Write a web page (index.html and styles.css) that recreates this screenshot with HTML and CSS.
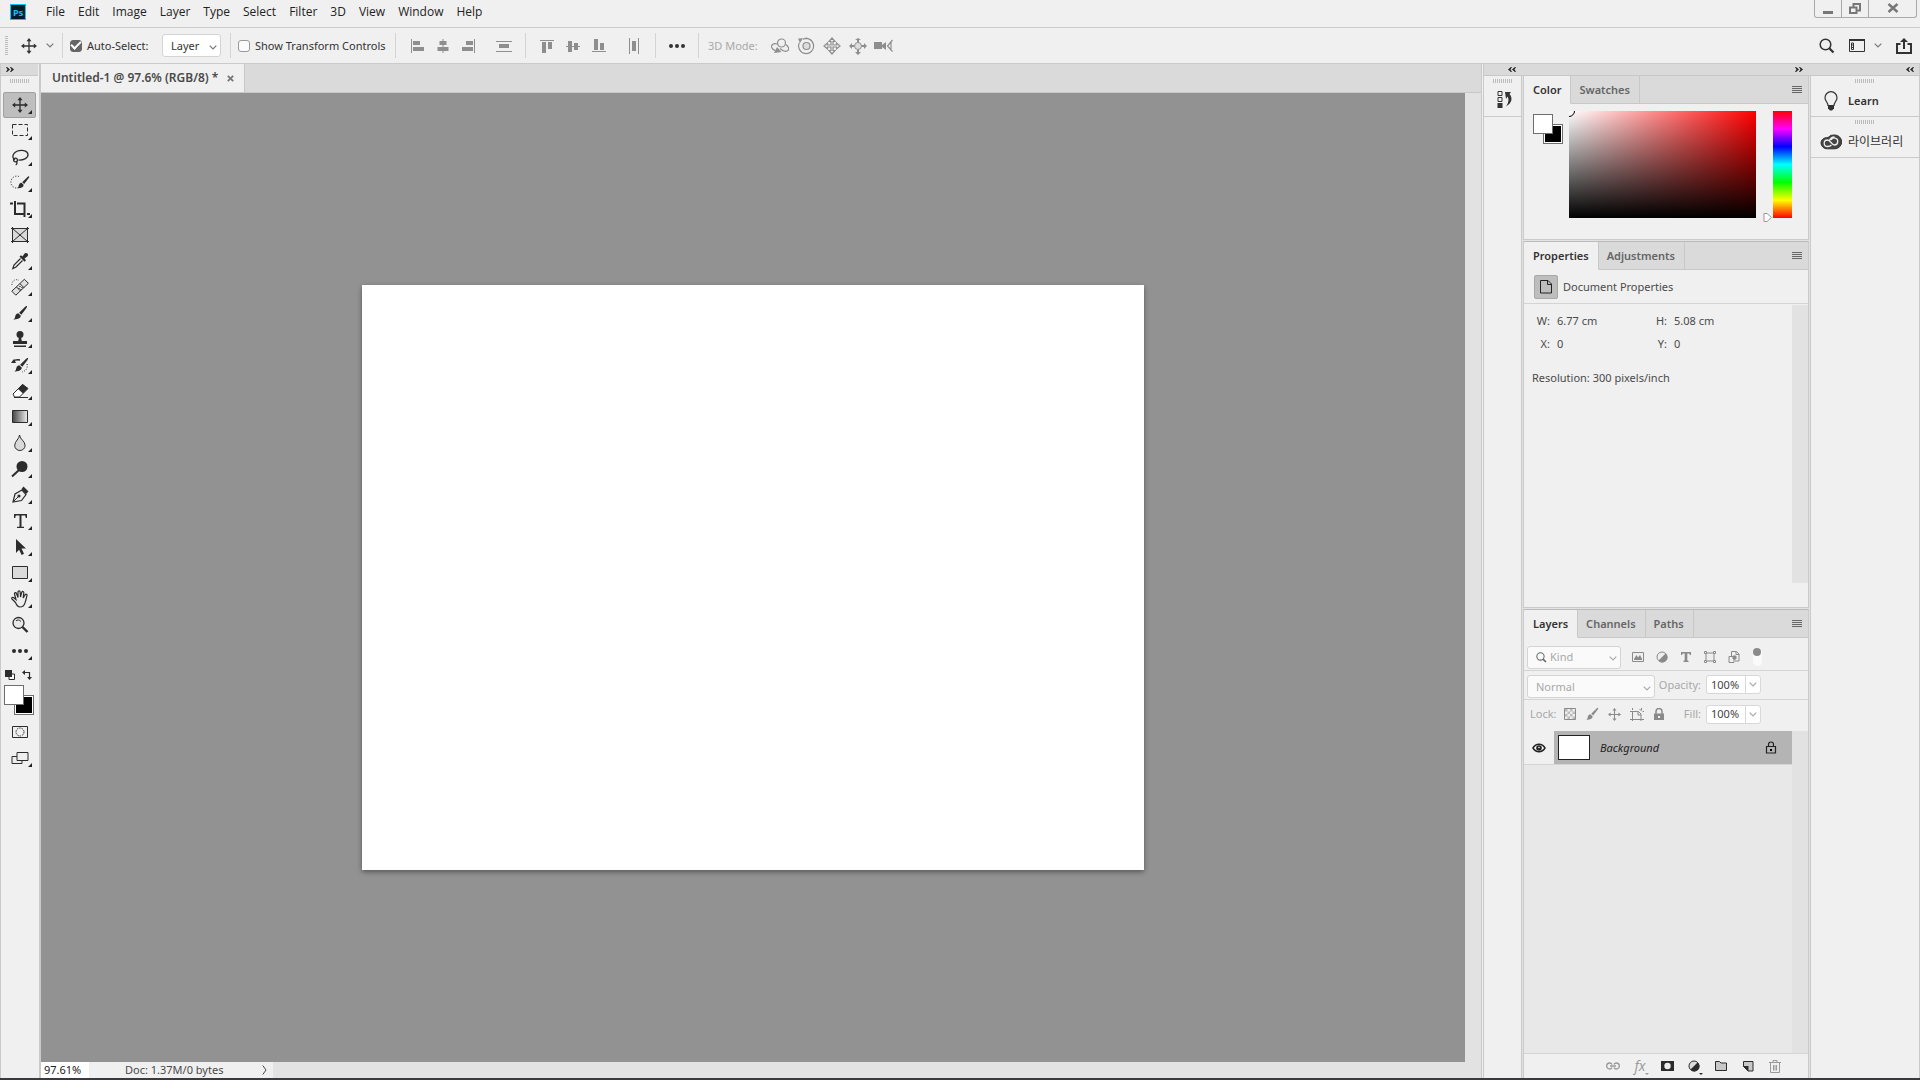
FILE: index.html
```
<!DOCTYPE html>
<html lang="en">
<head>
    <meta charset="UTF-8">
    <meta name="viewport" content="width=device-width, initial-scale=1.0">
    <title>Untitled-1 @ 97.6% (RGB/8) *</title>
    <link rel="stylesheet" href="styles.css">
</head>
<body>
    <!-- shared icons -->
    <svg class="sprite">
        <symbol id="chevron" viewBox="0 0 8 5"><path d="M.7.7 4 4 7.3.7" fill="none" stroke="currentColor" stroke-width="1.2"/></symbol>
        <symbol id="burger" viewBox="0 0 10 8"><path d="M0 .5h10M0 2.5h10M0 4.5h10M0 6.5h10" stroke="currentColor"/></symbol>
        <symbol id="expand" viewBox="0 0 8 5"><path d="M0 0h1l3 2.5L1 5H0l1.5-2.5zM4 0h1l3 2.5L5 5H4l1.500-2.500z" fill="currentColor"/></symbol>
        <symbol id="collapse" viewBox="0 0 8 5"><path d="M4 0H3L0 2.500 3 5h1L2.500 2.500zM8 0H7L4 2.500 7 5h1L6.500 2.500z" fill="currentColor"/></symbol>
        <symbol id="move" viewBox="0 0 16 16"><path d="M8 2v12M2 8h12" stroke="currentColor" stroke-width="1.300"/><path d="M8 0l2.500 3.200h-5zM8 16l2.500-3.200h-5zM0 8l3.200-2.500v5zM16 8l-3.200-2.500v5z" fill="currentColor"/></symbol>
        <symbol id="brush" viewBox="0 0 18 18"><path d="M16.800 1.200c.6.5-.2 1.800-.9 2.800L10.500 11 8 8.600 14.500 2.300c.9-.8 1.800-1.500 2.300-1.100zM7 9.300l2.800 2.600c.2 3-3 4.600-8.300 4.300 2-.9 1.700-2.200 2.300-4.200.5-1.700 1.800-2.600 3.200-2.700z" fill="currentColor"/></symbol>
        <symbol id="search" viewBox="0 0 16 16"><circle cx="6.500" cy="6.500" r="5.300" fill="none" stroke="currentColor" stroke-width="1.500"/><path d="M10.300 10.300l4.200 4.200" stroke="currentColor" stroke-width="2.300"/></symbol>
    </svg>

    <header class="menubar">
        <svg class="logo" width="16" height="16"><rect x=".5" y=".5" width="15" height="15" fill="#001d26" stroke="#00c8ff"/><text x="3" y="11.500">Ps</text></svg>
        <nav class="menus">
            <button>File</button>
            <button>Edit</button>
            <button>Image</button>
            <button>Layer</button>
            <button>Type</button>
            <button>Select</button>
            <button>Filter</button>
            <button>3D</button>
            <button>View</button>
            <button>Window</button>
            <button>Help</button>
        </nav>
        <div class="window-buttons">
            <button aria-label="Minimize"><svg width="12" height="12"><path d="M1 9.500h10" stroke="currentColor" stroke-width="3"/></svg></button>
            <button aria-label="Restore"><svg width="12" height="12" fill="none" stroke="currentColor" stroke-width="2"><path d="M4.500 3.500V1H11v6.500H8.500M1 4.500h6.500V10H1z"/></svg></button>
            <button class="close" aria-label="Close"><svg width="12" height="12"><path d="M1.500 1l9 8M10.500 1l-9 8" stroke="currentColor" stroke-width="2.400"/></svg></button>
        </div>
    </header>

    <div class="optionsbar">
        <span class="grip grip-vertical"></span>
        <button class="current-tool" aria-label="Move tool"><svg width="16" height="16"><use href="#move"/></svg><svg class="chevron" width="8" height="5"><use href="#chevron"/></svg></button>
        <span class="divider"></span>
        <label class="check auto-select"><input type="checkbox" checked>Auto-Select:</label>
        <span class="dropdown option-target">
            <select aria-label="Auto-select target"><option>Layer</option><option>Group</option></select>
            <svg class="chevron" width="8" height="5"><use href="#chevron"/></svg>
        </span>
        <span class="divider"></span>
        <label class="check transform"><input type="checkbox">Show Transform Controls</label>
        <span class="divider"></span>
        <div class="option-group align">
            <button aria-label="Align left edges"><svg width="16" height="16"><path d="M2 1h1v14H2zM4 3h7v4H4zM4 9h11v4H4z"/></svg></button>
            <button aria-label="Align horizontal centers"><svg width="16" height="16"><path d="M7.500 1h1v14h-1zM4.500 3h7v4h-7zM2.500 9h11v4h-11z"/></svg></button>
            <button aria-label="Align right edges"><svg width="16" height="16"><path d="M13 1h1v14h-1zM5 3h7v4H5zM1 9h11v4H1z"/></svg></button>
            <button class="spaced" aria-label="Distribute vertically"><svg width="16" height="16"><path d="M0 3h16v1H0zM0 13h16v1H0zM3 6h10v4H3z"/></svg></button>
        </div>
        <span class="divider"></span>
        <div class="option-group align">
            <button aria-label="Align top edges"><svg width="16" height="16"><path d="M1 2h14v1H1zM3 4h4v11H3zM9 4h4v7H9z"/></svg></button>
            <button aria-label="Align vertical centers"><svg width="16" height="16"><path d="M1 8h14v1H1zM3 3h4v11H3zM9 5h4v7H9z"/></svg></button>
            <button aria-label="Align bottom edges"><svg width="16" height="16"><path d="M1 13h14v1H1zM3 1h4v11H3zM9 5h4v7H9z"/></svg></button>
            <button class="spaced" aria-label="Distribute horizontally"><svg width="16" height="16"><path d="M3 0h1v16H3zM12 0h1v16h-1zM6 3h4v10H6z"/></svg></button>
        </div>
        <span class="divider"></span>
        <div class="option-group">
            <button aria-label="More options"><svg width="16" height="16"><circle cx="2" cy="8" r="2"/><circle cx="8" cy="8" r="2"/><circle cx="14" cy="8" r="2"/></svg></button>
        </div>
        <span class="divider"></span>
        <span class="mode-label">3D Mode:</span>
        <div class="option-group align">
            <button aria-label="Orbit the 3D camera"><svg width="18" height="16" fill="none" stroke="currentColor" stroke-width="1.200"><circle cx="10.500" cy="5" r="4"/><path d="M6 6C2 5 0 7 .7 9.500c.6 1.500 2 2.500 3.800 3.200M15 6.500c3 2.500 3.500 5 1.500 6.300-2 1-5 0-7.500-2.300"/><path d="M6 9l4.500 5-7.500 1z" fill="currentColor" stroke="none"/></svg></button>
            <button aria-label="Roll the 3D camera"><svg width="18" height="18" fill="none" stroke="currentColor" stroke-width="1.200"><circle cx="9.500" cy="9" r="3.500" fill="#ddd"/><path d="M2.500 5.500A7.500 7.500 0 1 0 6 2.200c3-1.500 7-1 9 2"/><path d="M1 1.500l5-.3-3 4.800z" fill="currentColor" stroke="none"/></svg></button>
            <button aria-label="Pan the 3D camera"><svg width="18" height="18" fill="#eee" stroke="currentColor" stroke-width="1.200"><path d="M9 1l3 3.500h-2V8h3.500V6L17 9l-3.500 3v-2H10v3.500h2L9 17l-3-3.500h2V10H4.500v2L1 9l3.500-3v2H8V4.500H6z"/></svg></button>
            <button aria-label="Slide the 3D camera"><svg width="18" height="18"><circle cx="9" cy="9" r="3.500" fill="#ddd" stroke="currentColor"/><path d="M8 5h2V3h2L9 1 6 3h2zM8 13h2v2h2l-3 3-3-3h2zM5 8v2H3v2L0 9l3-3v2zM13 8v2h2v2l3-3-3-3v2z"/></svg></button>
            <button aria-label="Zoom the 3D camera"><svg width="20" height="14"><path d="M0 3h8v7H0zM8 6l4-3v8L8 8z"/><path d="M18.500 1l-5 6 5 5.500M17 3v7" fill="none" stroke="currentColor" stroke-width="1.200"/></svg></button>
        </div>
        <div class="workspace-tools">
            <button aria-label="Search"><svg width="16" height="16"><use href="#search"/></svg></button>
            <button class="workspace" aria-label="Workspace"><svg width="16" height="13" fill="none" stroke="currentColor"><path d="M.5 1h15v11.500H.5z"/><path d="M0 1h16" stroke-width="2"/><path d="M2.500 4h2v6.500h-2zM2.500 6h2M2.500 8.500h2"/></svg><svg class="chevron" width="8" height="5"><use href="#chevron"/></svg></button>
            <button aria-label="Share"><svg width="16" height="16" fill="none" stroke="currentColor" stroke-width="2"><path d="M4.500 6H1v9h14V6h-3.500M8 11V3"/><path d="M8 0l4 4H4z" fill="currentColor" stroke="none"/></svg></button>
        </div>
    </div>

    <main class="workspace-area">
        <aside class="toolbox">
            <button class="strip strip-left" aria-label="Expand tools"><svg width="8" height="5"><use href="#expand"/></svg></button>
            <span class="grip"></span>
            <div class="tools">
                <button class="tool more active" aria-label="Move"><svg width="18" height="18"><use href="#move" x="1" y="1" width="16" height="16"/></svg></button>
                <button class="tool more" aria-label="Rectangular marquee"><svg width="18" height="18"><path d="M1.500 2.500h15v11h-15z" fill="none" stroke="currentColor" stroke-dasharray="4 2"/></svg></button>
                <button class="tool more" aria-label="Lasso"><svg width="18" height="18" fill="none" stroke="currentColor" stroke-width="1.300"><path d="M4 12C0 9 2 4 8 2.600c5-1 9 .9 9 4.200 0 3.500-5 5.600-9.500 5.200"/><circle cx="4.500" cy="12" r="1.900"/><path d="M5.500 13.500c1 1.500.4 3-.8 3.500"/></svg></button>
                <button class="tool more" aria-label="Quick selection"><svg width="20" height="18"><path d="M9 2.500a6 6 0 1 0-1 11.500" fill="none" stroke="currentColor" stroke-dasharray="1.200 1.500"/><use href="#brush" x="6" y="1" width="14" height="15"/></svg></button>
                <button class="tool more" aria-label="Crop"><svg width="20" height="18"><path d="M0 3.500h3M5 1v13h10M7 3.500h7.500V17M17 14h3" fill="none" stroke="currentColor" stroke-width="2"/></svg></button>
                <button class="tool" aria-label="Frame"><svg width="18" height="18" fill="#dadada" stroke="currentColor"><path d="M1.500 2.500h15v13h-15z"/><path d="M1.500 2.500l15 13M16.500 2.500l-15 13"/><path d="M0 2.500h2M16 2.500h2M0 15.500h2M16 15.500h2M1.500 1v2M16.500 1v2M1.500 15v2M16.500 15v2"/></svg></button>
                <button class="tool more" aria-label="Eyedropper"><svg width="18" height="18"><path d="M9.500 6.500L3 13l-1.200 3.500L5 15l6.500-6.500" fill="#eee" stroke="currentColor" stroke-width="1.200"/><path d="M8.500 4.500L10 3.200l1.500 1.200 2-2.800c1-1 2.300-.7 3 0 .7.900.8 2-.2 3l-2.800 2L15 8.300 13.500 9.800z" fill="currentColor"/></svg></button>
                <button class="tool more" aria-label="Spot healing brush"><svg width="18" height="18" fill="none" stroke="currentColor"><path d="M1 7a4.500 4.500 0 0 1 7-4.500" stroke-dasharray="1 1.500"/><path d="M.8 13.200L13.400 1.300l4 4L4.800 17.200z" fill="#e0e0e0"/><path d="M5.500 9l4 4M9 5.700l4 4"/><path d="M9 8v1M11 9v1M8 10v1M10 11v1" stroke-width="1.200"/></svg></button>
                <button class="tool more" aria-label="Brush"><svg width="16" height="18"><use href="#brush"/></svg></button>
                <button class="tool more" aria-label="Clone stamp"><svg width="18" height="18" fill="currentColor"><circle cx="9" cy="4.500" r="3.500"/><path d="M8 7h2l.8 4H16v3H2v-3h5.200zM3 15.500h12V17H3z"/></svg></button>
                <button class="tool more" aria-label="History brush"><svg width="18" height="18"><use href="#brush" x="2" width="16" height="18"/><path d="M2 5.500c2-2 4-2 7-1.500" fill="none" stroke="currentColor" stroke-width="1.500"/><path d="M0 7l3-4 2 4z"/><path d="M16 8c1 4-1 7-5 8" fill="none" stroke="currentColor" stroke-dasharray="1 1.500"/></svg></button>
                <button class="tool more" aria-label="Eraser"><svg width="18" height="18"><path d="M2 12l9.500-9.500 5.500 4-8.500 8.500H3.500z" fill="#fff" stroke="currentColor"/><path d="M7 7l4.500-5 5.500 4.500-5 5z"/><path d="M3 15.500h14" stroke="currentColor"/></svg></button>
                <button class="tool more" aria-label="Gradient"><svg width="18" height="18"><defs><linearGradient id="fade"><stop stop-color="#444"/><stop offset="1" stop-color="#eee"/></linearGradient></defs><path d="M1.500 2.500h15v12h-15z" fill="url(#fade)" stroke="currentColor"/></svg></button>
                <button class="tool more" aria-label="Blur"><svg width="18" height="18"><path d="M8.500 1c0 4-4.800 6-4.800 10.500a5.200 5 0 0 0 10.400 0C14.100 7 9 5.500 8.500 1z" fill="#dadada" stroke="currentColor"/></svg></button>
                <button class="tool more" aria-label="Dodge"><svg width="18" height="18"><circle cx="11" cy="6.500" r="5.500"/><path d="M8 10l-7 6.500" stroke="currentColor" stroke-width="2"/></svg></button>
                <button class="tool more" aria-label="Pen"><svg width="18" height="18"><path d="M2 16l2-8 7-4 4 4.500-4.500 6z" fill="#eee" stroke="currentColor" stroke-width="1.200"/><path d="M10.500 3l2-2.500 5 5-2.500 2.500z"/><path d="M2 16l6-6" stroke="currentColor"/><circle cx="8" cy="10" r="1.600"/></svg></button>
                <button class="tool more" aria-label="Type"><svg width="18" height="18"><path d="M3 2h13v4h-1.200l-.6-2.400h-3.700v11.200H13V16H6v-1.200h2.500V3.600H4.800L4.200 6H3z"/></svg></button>
                <button class="tool more" aria-label="Path selection"><svg width="18" height="18"><path d="M5 1l10 9.500h-4.500l2.500 5.300-2.400 1.200-2.500-5.200L5 15z"/></svg></button>
                <button class="tool more" aria-label="Rectangle"><svg width="18" height="18"><path d="M1.500 2.500h15v12h-15z" fill="#dadada" stroke="currentColor"/></svg></button>
                <button class="tool more" aria-label="Hand"><svg width="18" height="18" fill="#eee" stroke="currentColor" stroke-width="1.200"><path d="M4.500 12.500L1 9c-1-1.200.7-2.200 1.800-1.300L5 9.500 3.500 4C3.200 2.500 5 2 5.500 3.500L7 7.500V2C7 .6 9 .6 9.200 2l.3 5L10.800 2.200c.5-1.300 2.200-.8 2 .5L12.200 8l1.900-3.200c.8-1.200 2.300-.4 1.900.8-.9 3.200-1.200 5-1.900 7-1 3.500-3 4.400-5.100 4.400-2.500 0-3.500-2-4.500-4.500z"/></svg></button>
                <button class="tool" aria-label="Zoom"><svg width="18" height="18"><circle cx="7.500" cy="7" r="5.500" fill="#e8e8e8" stroke="currentColor" stroke-width="1.300"/><path d="M5 5c1-1.500 3.500-1.500 5 .5" fill="none" stroke="currentColor"/><path d="M11.500 11l5 5" stroke="currentColor" stroke-width="2.400"/></svg></button>
                <button class="tool more" aria-label="Edit toolbar"><svg width="18" height="18"><circle cx="3" cy="9" r="2"/><circle cx="9" cy="9" r="2"/><circle cx="15" cy="9" r="2"/></svg></button>
            </div>
            <div class="color-shortcuts">
                <button aria-label="Default colors"><svg width="10" height="10"><path d="M4 4h5.500v5.500H4z" fill="#fff" stroke="currentColor"/><path d="M0 0h7v7H0z"/></svg></button>
                <button aria-label="Swap colors"><svg width="10" height="10"><path d="M2 2.500h5.500V8" fill="none" stroke="currentColor" stroke-width="1.200"/><path d="M0 2.500L3 0v5zM5 7h5l-2.500 3z"/></svg></button>
            </div>
            <div class="swatches">
                <button class="swatch swatch-back" aria-label="Background color"></button>
                <button class="swatch swatch-front" aria-label="Foreground color"></button>
            </div>
            <div class="modes">
                <button class="tool" aria-label="Quick mask"><svg width="18" height="18" fill="none" stroke="currentColor"><path d="M1.500 3.500h15v11h-15z"/><circle cx="9" cy="9" r="4" stroke-dasharray="1.500 1"/></svg></button>
                <button class="tool more" aria-label="Screen mode"><svg width="18" height="18" fill="#eee" stroke="currentColor"><path d="M1 7.500h10v7H1z"/><path d="M6 3.500h11v8H6z"/></svg></button>
            </div>
        </aside>

        <section class="document">
            <div class="document-tabs">
                <div class="document-tab">
                    <span>Untitled-1 @ 97.6% (RGB/8) *</span>
                    <button aria-label="Close document"><svg width="7" height="7"><path d="M.8.8l5.400 5.400M6.200.8L.8 6.200" stroke="currentColor" stroke-width="1.800"/></svg></button>
                </div>
            </div>
            <div class="viewport">
                <div class="canvas-area"><div class="canvas"></div></div>
                <div class="scroll-track"></div>
            </div>
            <footer class="statusbar">
                <input class="zoom" aria-label="Zoom" value="97.61%">
                <div class="doc-info">
                    <span>Doc: 1.37M/0 bytes</span>
                    <button aria-label="Status options"><svg width="5" height="10"><path d="M.8.5L4 5 .8 9.500" fill="none" stroke="currentColor"/></svg></button>
                </div>
            </footer>
        </section>

        <aside class="docks">
            <div class="strip dock-strip">
                <button class="collapse-icons" aria-label="Expand icon dock"><svg width="8" height="5"><use href="#collapse"/></svg></button>
                <button class="collapse-panels" aria-label="Collapse panels"><svg width="8" height="5"><use href="#expand"/></svg></button>
                <button class="collapse-right" aria-label="Expand right dock"><svg width="8" height="5"><use href="#collapse"/></svg></button>
            </div>
            <div class="dock-columns">
                <div class="icon-dock">
                    <div class="dock-group">
                        <span class="grip"></span>
                        <button aria-label="History"><svg width="16" height="18"><path d="M1 .5h4v4H1zM1 6.500h4v4H1z" fill="none" stroke="currentColor"/><path d="M.5 12h5v5h-5zM8 1h6l-1.500 2c3.500 4 2.500 9-3.500 12.500C12 11 12 8 10.500 5.500L9 8z"/></svg></button>
                    </div>
                </div>

                <div class="panels">
                    <section class="panel color-panel">
                        <div class="tabs">
                            <button class="tab active">Color</button>
                            <button class="tab">Swatches</button>
                            <button class="panel-menu" aria-label="Panel menu"><svg width="10" height="8"><use href="#burger"/></svg></button>
                        </div>
                        <div class="picker">
                            <div class="swatches">
                                <button class="swatch swatch-back" aria-label="Background color"></button>
                                <button class="swatch swatch-front" aria-label="Foreground color"></button>
                            </div>
                            <div class="color-field"><span class="field-cursor"></span></div>
                            <svg class="hue-pointer" width="9" height="9"><path d="M1 .5h3L8.500 4.500 4 8.500H1z" fill="#fff" stroke="#999"/></svg>
                            <div class="hue"></div>
                        </div>
                    </section>

                    <section class="panel properties-panel">
                        <div class="tabs">
                            <button class="tab active">Properties</button>
                            <button class="tab">Adjustments</button>
                            <button class="panel-menu" aria-label="Panel menu"><svg width="10" height="8"><use href="#burger"/></svg></button>
                        </div>
                        <div class="properties-title">
                            <button aria-label="Document"><svg width="12" height="14" fill="none" stroke="#222"><path d="M.5.5H8l3.500 3.500v9H.5z"/><path d="M7.500.5v4h4"/></svg></button>
                            <span>Document Properties</span>
                        </div>
                        <div class="properties-body">
                            <div class="properties-content">
                                <dl class="measures">
                                    <dt>W:</dt><dd>6.77 cm</dd>
                                    <dt>H:</dt><dd>5.08 cm</dd>
                                    <dt>X:</dt><dd>0</dd>
                                    <dt>Y:</dt><dd>0</dd>
                                </dl>
                                <p class="resolution">Resolution: 300 pixels/inch</p>
                            </div>
                            <div class="scroll-track"></div>
                        </div>
                    </section>

                    <section class="panel layers-panel">
                        <div class="tabs">
                            <button class="tab active">Layers</button>
                            <button class="tab">Channels</button>
                            <button class="tab">Paths</button>
                            <button class="panel-menu" aria-label="Panel menu"><svg width="10" height="8"><use href="#burger"/></svg></button>
                        </div>
                        <div class="layer-row filter-row">
                            <span class="dropdown kind">
                                <svg class="kind-icon" width="11" height="11"><use href="#search"/></svg>
                                <select aria-label="Filter type"><option>Kind</option><option>Name</option></select>
                                <svg class="chevron" width="8" height="5"><use href="#chevron"/></svg>
                            </span>
                            <div class="filters">
                                <button aria-label="Pixel layers"><svg width="12" height="12"><path d="M.5 1.500h11v9H.5z" fill="none" stroke="currentColor"/><path d="M2 8l2.500-4L6 6.500 8 4l2 4v1H2z"/></svg></button>
                                <button aria-label="Adjustment layers"><svg width="12" height="12"><circle cx="6" cy="6" r="5" fill="#eee" stroke="currentColor"/><path d="M9.500 2.500A5 5 0 1 1 2.500 9.500z"/></svg></button>
                                <button aria-label="Type layers"><svg width="12" height="12"><path d="M1 1h10v3H9.800c0-1-.5-1.500-1.300-1.500H7.300V9c0 .6.400.8 1.200.8V11h-5V9.800c.8 0 1.200-.2 1.200-.8V2.500H3.500C2.700 2.500 2.200 3 2.200 4H1z"/></svg></button>
                                <button aria-label="Shape layers"><svg width="12" height="12" fill="#eee" stroke="currentColor"><path d="M2 2h8v8H2z"/><path d="M.5.5h2v2h-2zM9.500.5h2v2h-2zM.5 9.500h2v2h-2zM9.500 9.500h2v2h-2z"/></svg></button>
                                <button aria-label="Smart objects"><svg width="12" height="12" fill="none" stroke="currentColor"><path d="M3.500 5V.5h5l2.500 2.500v7H7M8 .5V3.500h3"/><path d="M1 5.500h5v6H1z"/><path d="M5 5h3v3H5z" fill="currentColor"/></svg></button>
                                <button class="filter-toggle" aria-label="Toggle filtering"><span></span></button>
                            </div>
                        </div>
                        <div class="layer-row blend-row">
                            <span class="dropdown blend">
                                <select aria-label="Blend mode"><option>Normal</option><option>Multiply</option></select>
                                <svg class="chevron" width="8" height="5"><use href="#chevron"/></svg>
                            </span>
                            <label class="amount">Opacity: <span class="stepper"><input value="100%"><button aria-label="Opacity slider"><svg width="8" height="5"><use href="#chevron"/></svg></button></span></label>
                        </div>
                        <div class="layer-row lock-row">
                            <span class="lock-label">Lock:</span>
                            <div class="locks">
                                <button aria-label="Lock transparent pixels"><svg width="12" height="12"><path d="M.5.500h11v11H.5z" fill="#eee" stroke="currentColor"/><path d="M1 1h2.500v2.500H1zM6 1h2.500v2.500H6zM3.500 3.500H6V6H3.500zM8.500 3.500H11V6H8.500zM1 6h2.500v2.500H1zM6 6h2.500v2.500H6zM3.500 8.500H6V11H3.500zM8.500 8.500H11V11H8.500z" opacity=".5"/></svg></button>
                                <button aria-label="Lock image pixels"><svg width="14" height="14"><use href="#brush"/></svg></button>
                                <button aria-label="Lock position"><svg width="13" height="13"><use href="#move"/></svg></button>
                                <button aria-label="Lock artboard nesting"><svg width="14" height="13" fill="none" stroke="currentColor"><path d="M0 3.500h8.500L11 6v7M2.500 0v2M2.500 3v10M0 11.500h14M9.500 1l2 2M12.500 3.500H14M11.500 0v2M8 4v3h3"/></svg></button>
                                <button aria-label="Lock all"><svg width="12" height="13"><path d="M3 6V3.500a3 3 0 0 1 6 0V6" fill="none" stroke="currentColor" stroke-width="1.500"/><path d="M1 5.500h10V12H1z"/><path d="M5 8h2v2H5z" fill="#eee"/></svg></button>
                            </div>
                            <label class="amount">Fill: <span class="stepper"><input value="100%"><button aria-label="Fill slider"><svg width="8" height="5"><use href="#chevron"/></svg></button></span></label>
                        </div>
                        <div class="layer-list">
                            <div class="layer-items">
                                <div class="layer">
                                    <button class="visibility" aria-label="Layer visibility"><svg width="14" height="10"><path d="M1 5c3-5 9-5 12 0-3 5-9 5-12 0z" fill="#fff" stroke="currentColor" stroke-width="1.500"/><circle cx="7" cy="5" r="2.800"/><circle cx="7" cy="4.500" r=".8" fill="#fff"/></svg></button>
                                    <div class="layer-body">
                                        <span class="thumb"></span>
                                        <em>Background</em>
                                        <svg width="12" height="13"><path d="M3.500 5.500V3.500a2.500 2.500 0 0 1 5 0v2M1.500 5.500h9v6.500h-9z" fill="none" stroke="#222" stroke-width="1.200"/><path d="M5 8h2v2H5z"/></svg>
                                    </div>
                                </div>
                            </div>
                            <div class="scroll-track"></div>
                        </div>
                        <div class="layer-actions">
                            <button class="off" aria-label="Link layers"><svg width="14" height="8" fill="none" stroke="currentColor" stroke-width="1.300"><path d="M6 2.500C5.500 1.300 4.800 1 3.700 1a3 3 0 0 0 0 6C4.800 7 5.500 6.700 6 5.500M8 2.500C8.500 1.300 9.200 1 10.300 1a3 3 0 0 1 0 6C9.200 7 8.500 6.700 8 5.500M4 4h6"/></svg></button>
                            <button class="off fx" aria-label="Layer style">fx</button>
                            <button aria-label="Add mask"><svg width="13" height="10"><path d="M0 0h13v10H0z"/><circle cx="6.500" cy="5" r="3.200" fill="#eee"/></svg></button>
                            <button class="drop" aria-label="New adjustment layer"><svg width="12" height="12"><circle cx="6" cy="6" r="5" fill="#ddd" stroke="currentColor"/><path d="M9.500 2.500A5 5 0 1 1 2.500 9.500z"/></svg></button>
                            <button aria-label="New group"><svg width="12" height="10"><path d="M.5.5h4L6 2h5.500v7.500H.5z" fill="#c8c8c8" stroke="currentColor"/></svg></button>
                            <button aria-label="New layer"><svg width="11" height="11"><path d="M.5.5h9.500V10H5L.5 5.500z" fill="#c8c8c8" stroke="currentColor"/><path d="M0 5h5.500v5.500z"/></svg></button>
                            <button class="off" aria-label="Delete layer"><svg width="12" height="13" fill="none" stroke="currentColor"><path d="M0 2.500h12M4 2V.5h4V2M1.500 3v9.500h9V3M4.500 5v5.500M6 5v5.500M7.500 5v5.500"/></svg></button>
                        </div>
                    </section>
                </div>

                <div class="label-dock">
                    <div class="dock-group">
                        <span class="grip"></span>
                        <button><svg width="22" height="20"><path d="M8 14.500C8 11.500 5 10 5 6.700a6 6 0 0 1 12 0c0 3.300-3 4.800-3 7.800z" fill="none" stroke="currentColor" stroke-width="1.200"/><path d="M8 14h6v3.500L12 19.500h-2l-2-2z"/></svg>Learn</button>
                    </div>
                    <div class="dock-group">
                        <span class="grip"></span>
                        <button class="libraries"><svg width="22" height="16" fill="none" stroke="currentColor"><path d="M8 3.500A7 7 0 0 1 14.500 1 6.500 6.500 0 0 1 15 14.800H7.500A6 6 0 0 1 1 9c0-3 2.500-5.500 7-5.500z" fill="#444"/><path d="M11.500 11c-1.200 1.300-2.300 1.500-3.700 1.500-2 0-3.600-1.400-3.600-3.300S5.700 6 7.500 6c3 0 4 5 7 5a3.500 3.500 0 1 0-3.400-5M9.500 6.500C10.500 4 12.300 3 14.500 3" stroke="#eee" stroke-width="1.300"/></svg>라이브러리</button>
                    </div>
                </div>
            </div>
        </aside>
    </main>
</body>
</html>
```
FILE: styles.css
```
* {
    box-sizing: border-box;
}
body {
    margin: 0;
    height: 100vh;
    display: flex;
    flex-direction: column;
    overflow: hidden;
    background: #f0f0f0;
    border-bottom: 2px solid #3a3a3e;
    color: #4a4a4a;
    font-family: "Noto Sans", "Noto Sans CJK KR", sans-serif;
    font-size: 11px;
    line-height: 16px;
}
button, input, select {
    margin: 0;
    padding: 0;
    border: none;
    background: none;
    color: inherit;
    font: inherit;
}
svg {
    display: block;
    flex: none;
}
button svg:not([fill]) {
    fill: currentColor;
}
.sprite {
    display: none;
}
.chevron {
    color: #777;
}

/* menu bar */
.menubar {
    display: flex;
    align-items: center;
    height: 28px;
    padding: 0 3px 4px 10px;
    border-bottom: 1px solid #cacaca;
}
.logo text {
    fill: #00c8ff;
    font: bold 9px "Open Sans", sans-serif;
}
.menus {
    display: flex;
    gap: 13px;
    margin-left: 20px;
    color: #222;
    font: 12px/16px "Open Sans", sans-serif;
}
.window-buttons {
    display: flex;
    align-self: flex-start;
    height: 18px;
    margin-left: auto;
    border: 1px solid #aaa;
    border-top: none;
    border-radius: 0 0 3px 3px;
    color: #777;
}
.window-buttons button {
    display: flex;
    justify-content: center;
    width: 27px;
    padding-top: 3px;
    border-right: 1px solid #aaa;
}
.window-buttons .close {
    width: 47px;
    border-right: none;
}

/* options bar */
.optionsbar {
    display: flex;
    align-items: center;
    height: 36px;
    padding: 0 8px 0 5px;
    border-bottom: 1px solid #cacaca;
    color: #333;
}
.grip {
    width: 20px;
    height: 4px;
    background: repeating-linear-gradient(90deg, #bcbcbc 0 1px, transparent 1px 2px);
}
.grip-vertical {
    width: 3px;
    height: 20px;
    background: repeating-linear-gradient(#bcbcbc 0 1px, transparent 1px 2px);
}
.divider {
    width: 1px;
    height: 25px;
    background: #d4d4d4;
}
.current-tool {
    display: flex;
    align-items: center;
    gap: 9px;
    margin: 0 8px 0 13px;
}
.check {
    display: flex;
    align-items: center;
    gap: 5px;
    margin-left: 7px;
}
.auto-select {
    width: 92px;
}
.transform {
    width: 157px;
}
.check input {
    appearance: none;
    display: grid;
    place-items: center;
    width: 12px;
    height: 12px;
    border: 1px solid #999;
    border-radius: 3px;
    background: #fbfbfb;
}
.check input:checked {
    border-color: #666;
    background: #666;
}
.check input:checked::before {
    content: "";
    width: 8px;
    height: 4px;
    margin-bottom: 3px;
    border-left: 2px solid #fff;
    border-bottom: 2px solid #fff;
    transform: rotate(-45deg);
}
.dropdown {
    display: grid;
    align-items: center;
    height: 23px;
    border: 1px solid #d4d4d4;
    border-radius: 3px;
    background: #fafafa;
}
.dropdown > * {
    grid-area: 1 / 1;
}
.dropdown select {
    appearance: none;
    width: 100%;
    height: 100%;
    padding-left: 8px;
}
.dropdown .chevron {
    justify-self: end;
    margin: 3px 3px 0 0;
    pointer-events: none;
}
.option-target {
    width: 59px;
    margin-right: 9px;
    background: #fff;
}
.option-group {
    display: flex;
    margin: 0 8px;
}
.option-group button {
    display: grid;
    place-items: center;
    width: 26px;
    height: 26px;
}
.option-group .spaced {
    margin-left: 9px;
}
.align {
    color: #8e8e8e;
}
.mode-label {
    width: 51px;
    margin-left: 9px;
    color: #aaa;
}
.workspace-tools {
    display: flex;
    align-items: center;
    gap: 14px;
    margin-left: auto;
}
.workspace {
    display: flex;
    align-items: center;
    gap: 9px;
}

/* main area */
.workspace-area {
    flex: 1;
    display: flex;
    min-height: 0;
}
.strip {
    display: flex;
    align-items: center;
    height: 12px;
    border-bottom: 1px solid #c8c8c8;
    background: #dadada;
    color: #222;
}
.strip-left {
    width: 100%;
    padding-left: 5px;
}
.scroll-track {
    flex: none;
    width: 16px;
    background: #e2e2e2;
}

/* toolbox */
.toolbox {
    display: flex;
    flex: none;
    flex-direction: column;
    width: 41px;
    padding-right: 1px;
    border-left: 1px solid #cacaca;
    border-right: 2px solid #cacaca;
    color: #2c2c2c;
}
.toolbox > .grip {
    margin: 3px 0 9px 9px;
}
.tools, .modes {
    display: flex;
    flex-direction: column;
    padding-left: 2px;
}
.tool {
    position: relative;
    display: grid;
    place-items: center;
    width: 33px;
    height: 26px;
    border: 1px solid transparent;
    border-radius: 2px;
}
.tool.active {
    border-color: #a0a0a0;
    background: #bebebe;
}
.tool.more::after {
    content: "";
    position: absolute;
    right: 3px;
    bottom: 3px;
    border: 2px solid transparent;
    border-right-color: #222;
    border-bottom-color: #222;
}
.color-shortcuts {
    display: flex;
    gap: 7px;
    padding: 6px 4px 5px;
}
.swatches {
    position: relative;
    flex: none;
    width: 30px;
    height: 30px;
}
.toolbox .swatches {
    margin: 0 0 4px 3px;
}
.swatch {
    position: absolute;
    width: 20px;
    height: 20px;
    border: 1px solid #6e6e6e;
}
.swatch-back {
    right: 0;
    bottom: 0;
    background: #000;
    box-shadow: inset 0 0 0 1px #fff;
}
.swatch-front {
    top: 0;
    left: 0;
    background: #fff;
}

/* document window */
.document {
    flex: 1;
    display: flex;
    flex-direction: column;
    min-width: 0;
    border-right: 1px solid #cacaca;
}
.document-tabs {
    display: flex;
    height: 29px;
    border-bottom: 1px solid #c8c8c8;
    background: #dadada;
}
.document-tab {
    display: flex;
    align-items: center;
    gap: 9px;
    padding: 0 10px 0 11px;
    border-right: 1px solid #c8c8c8;
    background: #f0f0f0;
    font-size: 12px;
    font-weight: 600;
}
.document-tab button {
    color: #777;
}
.viewport {
    flex: 1;
    display: flex;
    min-height: 0;
}
.canvas-area {
    flex: 1;
    display: flex;
    align-items: center;
    justify-content: center;
    background: #929292;
}
.canvas {
    width: 54.85%;
    aspect-ratio: 4 / 3;
    background: #fff;
    box-shadow: 0 2px 5px rgba(0, 0, 0, 0.4);
}
.statusbar {
    display: flex;
    height: 16px;
    background: #e2e2e2;
}
.zoom {
    width: 48px;
    padding-left: 3px;
    background: #fff;
    color: #222;
}
.doc-info {
    display: flex;
    align-items: center;
    justify-content: space-between;
    width: 184px;
    padding: 0 6px 0 36px;
    background: #f0f0f0;
}

/* docks */
.docks {
    display: flex;
    flex: none;
    flex-direction: column;
    margin-left: 1px;
    border-left: 1px solid #cacaca;
    border-right: 1px solid #cacaca;
}
.collapse-icons {
    width: 32px;
    padding-left: 24px;
}
.collapse-panels {
    margin-left: auto;
    margin-right: 103px;
}
.collapse-right {
    margin-right: 5px;
}
.dock-columns {
    flex: 1;
    display: flex;
    min-height: 0;
}
.icon-dock {
    width: 37px;
}
.dock-group {
    display: flex;
    flex-direction: column;
    align-items: center;
    height: 41px;
    padding-top: 3px;
    border-bottom: 1px solid #cacaca;
    color: #333;
}
.icon-dock .dock-group button {
    margin-top: 8px;
}
.icon-dock svg {
    margin-left: 4px;
}
.panels {
    display: flex;
    flex-direction: column;
    gap: 1px;
    width: 290px;
    padding: 0 1px;
    border-left: 1px solid #cacaca;
    border-right: 1px solid #cacaca;
    background: #e2e2e2;
}
.panel {
    display: flex;
    flex-direction: column;
    border: 1px solid #cacaca;
    border-top: none;
    background: #f0f0f0;
}
.panel + .panel {
    border-top: 1px solid #bbb;
}
.tabs {
    display: flex;
    flex: none;
    height: 28px;
    background: #dadada;
    font-weight: 600;
    color: #666;
}
.tab {
    padding: 0 9px 0 8px;
    border-right: 1px solid #c8c8c8;
    border-bottom: 1px solid #c8c8c8;
}
.tab.active {
    padding-left: 9px;
    border-bottom-color: #f0f0f0;
    background: #f0f0f0;
    color: #333;
}
.panel-menu {
    flex: 1;
    display: flex;
    align-items: center;
    justify-content: flex-end;
    padding-right: 6px;
    border-bottom: 1px solid #c8c8c8;
}
.color-panel {
    height: 164px;
}
.picker {
    display: flex;
    height: 118px;
    padding: 7px 16px 0 8px;
}
.picker .swatches {
    margin: 3px 6px 0 1px;
}
.color-field {
    flex: 1;
    position: relative;
    overflow: hidden;
    height: 107px;
    background: linear-gradient(transparent, #000), linear-gradient(90deg, #fff, #f00);
}
.field-cursor {
    position: absolute;
    top: -6px;
    left: -6px;
    width: 12px;
    height: 12px;
    border: 1px solid #000;
    border-radius: 50%;
}
.hue-pointer {
    align-self: flex-end;
    margin: 0 1px 0 7px;
}
.hue {
    width: 19px;
    height: 107px;
    background: linear-gradient(#f00, #f0f, #00f, #0ff, #0f0, #ff0, #f00);
}

/* properties */
.properties-panel {
    height: 367px;
}
.properties-title {
    display: flex;
    align-items: center;
    gap: 5px;
    height: 34px;
    padding: 1px 0 0 10px;
    border-bottom: 1px solid #d4d4d4;
}
.properties-title button {
    display: grid;
    place-items: center;
    width: 24px;
    height: 24px;
    border: 1px solid #a8a8a8;
    border-radius: 2px;
    background: #bebebe;
}
.properties-body {
    display: flex;
    height: 279px;
    padding-top: 1px;
}
.properties-content {
    flex: 1;
    padding: 8px;
}
.measures {
    display: grid;
    grid-template-columns: 18px 83px 20px 1fr;
    gap: 7px 7px;
    margin: 0;
}
.measures dt {
    text-align: right;
}
.measures dd {
    margin: 0;
}
.resolution {
    margin: 18px 0 0;
}

/* layers */
.layers-panel {
    flex: 1;
    min-height: 0;
    border-bottom: none;
}
.layer-row {
    display: flex;
    flex: none;
    align-items: center;
    height: 29px;
    padding-left: 3px;
    border-bottom: 1px solid #d4d4d4;
    color: #a8a8a8;
}
.layer-row .chevron {
    color: #aaa;
}
.layer-row.filter-row {
    height: 33px;
    padding-top: 6px;
}
.layer-row.blend-row {
    align-items: flex-start;
    padding-top: 4px;
}
.layer-row.lock-row {
    height: 31px;
    padding: 0 0 3px 6px;
    border-bottom: none;
}
.kind {
    width: 94px;
}
.kind select {
    padding-left: 22px;
}
.kind-icon {
    margin-left: 8px;
    color: #666;
}
.blend {
    width: 128px;
}
.filters {
    display: flex;
    align-items: center;
    gap: 12px;
    margin-left: 11px;
    color: #8a8a8a;
}
.filter-toggle {
    width: 9px;
    height: 18px;
    margin-left: 1px;
    border-radius: 5px;
    background: #fafafa;
}
.filter-toggle span {
    display: block;
    width: 8px;
    height: 8px;
    margin-bottom: 10px;
    border-radius: 50%;
    background: #8a8a8a;
}
.amount {
    display: flex;
    align-items: center;
    gap: 5px;
    margin-left: auto;
    margin-right: 47px;
}
.stepper {
    display: flex;
    height: 19px;
    border: 1px solid #d8d8d8;
    border-radius: 3px;
    background: #fff;
    color: #444;
}
.stepper input {
    width: 39px;
    padding-left: 4px;
    border-right: 1px solid #d8d8d8;
}
.stepper button {
    display: grid;
    place-items: center;
    width: 14px;
    color: #aaa;
}
.locks {
    display: flex;
    align-items: center;
    gap: 9px;
    margin-left: 7px;
    color: #8a8a8a;
}
.layer-list {
    flex: 1;
    display: flex;
    min-height: 0;
    border-bottom: 1px solid #d4d4d4;
    background: #e8e8e8;
}
.layer-items {
    flex: 1;
}
.layer {
    display: flex;
    height: 34px;
    border-bottom: 1px solid #d4d4d4;
    background: #f0f0f0;
}
.visibility {
    display: grid;
    place-items: center;
    width: 30px;
    color: #222;
}
.layer-body {
    flex: 1;
    display: flex;
    align-items: center;
    gap: 10px;
    padding: 0 15px 0 4px;
    background: #b4b4b4;
    color: #222;
}
.layer-body em {
    flex: 1;
}
.thumb {
    width: 32px;
    height: 25px;
    border: 1px solid #222;
    background: #fff;
}
.layer-actions {
    display: flex;
    flex: none;
    align-items: center;
    justify-content: flex-end;
    gap: 5px;
    height: 24px;
    padding-right: 22px;
    color: #2c2c2c;
}
.layer-actions button {
    position: relative;
    display: grid;
    place-items: center;
    width: 22px;
    height: 18px;
}
.layer-actions .off {
    color: #999;
}
.layer-actions .fx {
    font: italic 14px/16px "Open Sans", sans-serif;
}
.layer-actions .fx::after, .layer-actions .drop::after {
    content: "";
    position: absolute;
    right: 2px;
    bottom: 0;
    border: 2px solid transparent;
    border-top-color: currentColor;
    border-bottom: none;
}

/* right dock */
.label-dock {
    width: 108px;
}
.label-dock .dock-group {
    align-items: stretch;
    font-weight: 600;
}
.label-dock .grip {
    margin-left: 44px;
}
.label-dock button {
    display: flex;
    flex: 1;
    align-items: center;
    gap: 6px;
    padding: 2px 0 0 9px;
}
.label-dock .libraries {
    font-size: 12px;
    font-weight: normal;
}
```
